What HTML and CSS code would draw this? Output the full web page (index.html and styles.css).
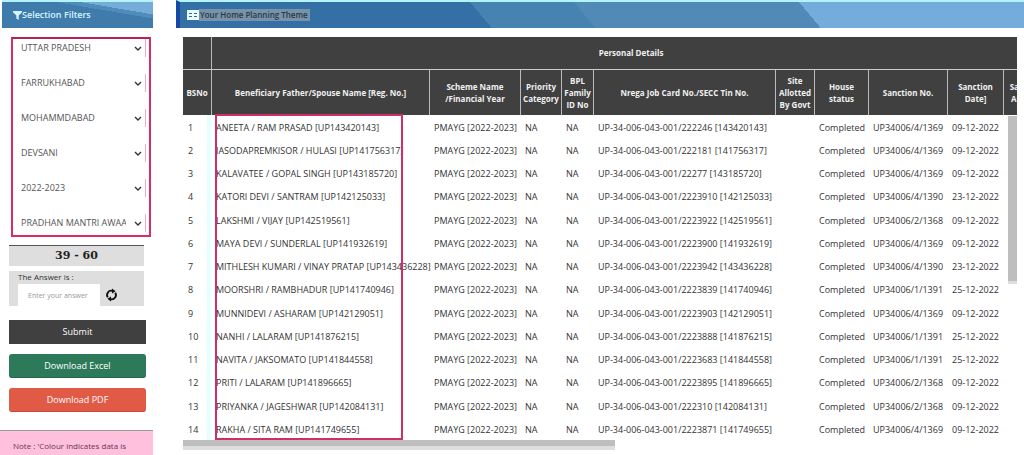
FILE: index.html
```html
<!DOCTYPE html>
<html lang="en">
<head>
<meta charset="utf-8">
<title>Home Planning</title>
<link rel="stylesheet" href="styles.css">
</head>
<body>
<div class="page">
  <aside class="sidebar">
    <h2 class="bar bar-side">
      <svg class="funnel" viewBox="0 0 10 10"><path d="M0 0h10v1.500L6.300 5v5L3.700 8.300V5L0 1.500z"/></svg>Selection Filters
    </h2>
    <form class="form">
      <div class="filters">
        <label class="field"><select aria-label="State"><option>UTTAR PRADESH</option></select><svg viewBox="0 0 8 5"><path d="M1 1l3 3 3-3"/></svg></label>
        <label class="field"><select aria-label="District"><option>FARRUKHABAD</option></select><svg viewBox="0 0 8 5"><path d="M1 1l3 3 3-3"/></svg></label>
        <label class="field"><select aria-label="Block"><option>MOHAMMDABAD</option></select><svg viewBox="0 0 8 5"><path d="M1 1l3 3 3-3"/></svg></label>
        <label class="field"><select aria-label="Panchayat"><option>DEVSANI</option></select><svg viewBox="0 0 8 5"><path d="M1 1l3 3 3-3"/></svg></label>
        <label class="field"><select aria-label="Year"><option>2022-2023</option></select><svg viewBox="0 0 8 5"><path d="M1 1l3 3 3-3"/></svg></label>
        <label class="field"><select aria-label="Scheme"><option>PRADHAN MANTRI AWAA</option></select><svg viewBox="0 0 8 5"><path d="M1 1l3 3 3-3"/></svg></label>
      </div>
      <div class="captcha">39 - 60</div>
      <div class="answer">
        <label for="answer">The Answer is :</label>
        <div class="answer-row">
          <input id="answer" type="text" placeholder="Enter your answer">
          <button class="refresh" type="button" aria-label="Refresh">
            <svg viewBox="0 0 14 14"><path class="arc" d="M3 9.500A4.600 4.600 0 0 1 8 2.500M11 4.500A4.600 4.600 0 0 1 6 11.500"/><path d="M7.500 0l4 3-4 2.500zM6.500 14l-4-3 4-2.500z"/></svg>
          </button>
        </div>
      </div>
      <button class="btn btn-submit" type="submit">Submit</button>
      <button class="btn btn-excel" type="button">Download Excel</button>
      <button class="btn btn-pdf" type="button">Download PDF</button>
    </form>
    <p class="note">Note : 'Colour indicates data is</p>
  </aside>
  <main class="main">
    <h1 class="bar bar-main">
      <svg class="tablet" viewBox="0 0 12 10"><path class="panel" d="M0 0h12v10H0z"/><path d="M2 3h3v1H2zM7 3h3v1H7zM2 6h3v1H2zM7 6h3v1H7z"/></svg><span class="mark">Your Home Planning Theme</span>
    </h1>
    <div class="viewport">
      <table class="grid">
        <colgroup><col class="c-no"><col class="c-name"><col class="c-scheme"><col class="c-priority"><col class="c-bpl"><col class="c-job"><col class="c-site"><col class="c-status"><col class="c-sanction"><col class="c-date"><col class="c-amount"></colgroup>
        <thead>
          <tr class="group"><th></th><th colspan="10">Personal Details</th></tr>
          <tr class="heads"><th>BSNo</th><th>Beneficiary Father/Spouse Name [Reg. No.]</th><th>Scheme Name /Financial Year</th><th>Priority Category</th><th>BPL Family ID No</th><th>Nrega Job Card No./SECC Tin No.</th><th>Site Allotted By Govt</th><th>House<br>status</th><th>Sanction No.</th><th>Sanction Date]</th><th>Sanction Amount</th></tr>
        </thead>
        <tbody>
          <tr><td>1</td><td>ANEETA / RAM PRASAD [UP143420143]</td><td>PMAYG [2022-2023]</td><td>NA</td><td>NA</td><td>UP-34-006-043-001/222246 [143420143]</td><td></td><td>Completed</td><td>UP34006/4/1369</td><td>09-12-2022</td><td></td></tr>
          <tr><td>2</td><td>JASODAPREMKISOR / HULASI [UP141756317]</td><td>PMAYG [2022-2023]</td><td>NA</td><td>NA</td><td>UP-34-006-043-001/222181 [141756317]</td><td></td><td>Completed</td><td>UP34006/4/1369</td><td>09-12-2022</td><td></td></tr>
          <tr><td>3</td><td>KALAVATEE / GOPAL SINGH [UP143185720]</td><td>PMAYG [2022-2023]</td><td>NA</td><td>NA</td><td>UP-34-006-043-001/22277 [143185720]</td><td></td><td>Completed</td><td>UP34006/4/1369</td><td>09-12-2022</td><td></td></tr>
          <tr><td>4</td><td>KATORI DEVI / SANTRAM [UP142125033]</td><td>PMAYG [2022-2023]</td><td>NA</td><td>NA</td><td>UP-34-006-043-001/2223910 [142125033]</td><td></td><td>Completed</td><td>UP34006/4/1390</td><td>23-12-2022</td><td></td></tr>
          <tr><td>5</td><td>LAKSHMI / VIJAY [UP142519561]</td><td>PMAYG [2022-2023]</td><td>NA</td><td>NA</td><td>UP-34-006-043-001/2223922 [142519561]</td><td></td><td>Completed</td><td>UP34006/2/1368</td><td>09-12-2022</td><td></td></tr>
          <tr><td>6</td><td>MAYA DEVI / SUNDERLAL [UP141932619]</td><td>PMAYG [2022-2023]</td><td>NA</td><td>NA</td><td>UP-34-006-043-001/2223900 [141932619]</td><td></td><td>Completed</td><td>UP34006/4/1369</td><td>09-12-2022</td><td></td></tr>
          <tr><td>7</td><td>MITHLESH KUMARI / VINAY PRATAP [UP143436228]</td><td>PMAYG [2022-2023]</td><td>NA</td><td>NA</td><td>UP-34-006-043-001/2223942 [143436228]</td><td></td><td>Completed</td><td>UP34006/4/1390</td><td>23-12-2022</td><td></td></tr>
          <tr><td>8</td><td>MOORSHRI / RAMBHADUR [UP141740946]</td><td>PMAYG [2022-2023]</td><td>NA</td><td>NA</td><td>UP-34-006-043-001/2223839 [141740946]</td><td></td><td>Completed</td><td>UP34006/1/1391</td><td>25-12-2022</td><td></td></tr>
          <tr><td>9</td><td>MUNNIDEVI / ASHARAM [UP142129051]</td><td>PMAYG [2022-2023]</td><td>NA</td><td>NA</td><td>UP-34-006-043-001/2223903 [142129051]</td><td></td><td>Completed</td><td>UP34006/4/1369</td><td>09-12-2022</td><td></td></tr>
          <tr><td>10</td><td>NANHI / LALARAM [UP141876215]</td><td>PMAYG [2022-2023]</td><td>NA</td><td>NA</td><td>UP-34-006-043-001/2223888 [141876215]</td><td></td><td>Completed</td><td>UP34006/1/1391</td><td>25-12-2022</td><td></td></tr>
          <tr><td>11</td><td>NAVITA / JAKSOMATO [UP141844558]</td><td>PMAYG [2022-2023]</td><td>NA</td><td>NA</td><td>UP-34-006-043-001/2223683 [141844558]</td><td></td><td>Completed</td><td>UP34006/1/1391</td><td>25-12-2022</td><td></td></tr>
          <tr><td>12</td><td>PRITI / LALARAM [UP141896665]</td><td>PMAYG [2022-2023]</td><td>NA</td><td>NA</td><td>UP-34-006-043-001/2223895 [141896665]</td><td></td><td>Completed</td><td>UP34006/2/1368</td><td>09-12-2022</td><td></td></tr>
          <tr><td>13</td><td>PRIYANKA / JAGESHWAR [UP142084131]</td><td>PMAYG [2022-2023]</td><td>NA</td><td>NA</td><td>UP-34-006-043-001/222310 [142084131]</td><td></td><td>Completed</td><td>UP34006/2/1368</td><td>09-12-2022</td><td></td></tr>
          <tr><td>14</td><td>RAKHA / SITA RAM [UP141749655]</td><td>PMAYG [2022-2023]</td><td>NA</td><td>NA</td><td>UP-34-006-043-001/2223871 [141749655]</td><td></td><td>Completed</td><td>UP34006/4/1369</td><td>09-12-2022</td><td></td></tr>
        </tbody>
      </table>
      <div class="highlight"></div>
      <div class="scroll-y"></div>
    </div>
    <div class="scroll-x"></div>
  </main>
</div>
</body>
</html>
```
FILE: styles.css
```css
* { box-sizing: border-box; }
body {
  margin: 0;
  background: #fff;
  color: #333;
  font: 9px/12px "Open Sans", "Noto Sans", sans-serif;
}
button, input, select { font: inherit; color: inherit; }
.page { display: flex; align-items: flex-start; gap: 23px; }
.sidebar { flex: 0 0 153px; min-width: 0; }
.main { flex: 1; min-width: 0; }

.bar {
  display: flex;
  align-items: center;
  height: 28px;
  margin: 0;
  border-top: 2px solid #b4f3fc;
  color: #d5f6ff;
  font-size: 9px;
  font-weight: 600;
}
.bar-side {
  margin-left: 2px;
  padding-left: 11px;
  background: linear-gradient(to bottom left, #76add8 0 24%, #4f8cbb 24% 32%, #3f7cab 32%);
}
.bar-main {
  padding-left: 7px;
  background: linear-gradient(50deg, #3470a6 0 36%, #4783b1 36% 48%, #518ab7 48% 74%, #74acdc 74%);
  border-left: 4px solid #1449a5;
}
.funnel { width: 9px; height: 9px; fill: #d5f6ff; }
.tablet { width: 12px; height: 10px; fill: #34689b; }
.tablet .panel { fill: #e9fcff; }
.mark { padding: 0 2px 0 1px; background: #7893a8; color: #25394b; font-size: 8px; }

.form { padding: 9px 2px 0 9px; }
.filters {
  display: grid;
  gap: 17px;
  margin: 0 0 8px 2px;
  padding-bottom: 3px;
  border: 2px solid #d82c66;
  border-top-color: #b82153;
}
.field { position: relative; display: grid; align-items: center; height: 18px; padding: 0 3px 0 8px; }
.field select {
  appearance: none;
  width: 100%;
  height: 18px;
  padding: 0 19px 0 0;
  border: 0;
  border-right: 1px solid #f4a9c6;
  background: #fff;
  color: #555;
}
.field svg {
  position: absolute;
  right: 7px;
  width: 8px;
  height: 5px;
  fill: none;
  stroke: #333;
  stroke-width: 1.4;
  pointer-events: none;
}
.captcha {
  height: 21px;
  margin-right: 7px;
  border-top: 1px solid #555;
  background: #dedede;
  color: #222;
  font: bold 11px/20px "DejaVu Serif", serif;
  text-align: center;
}
.answer { margin: 5px 7px 14px 0; padding-left: 9px; background: #dedede; }
.answer label { display: block; padding-bottom: 2px; font-size: 8px; line-height: 11px; }
.answer-row { display: flex; align-items: center; gap: 5px; }
.answer input {
  flex: 0 0 82px;
  min-width: 0;
  height: 22px;
  padding: 0 10px;
  border: 0;
  background: #fff;
  font-size: 7px;
}
.answer input::placeholder { color: #999; }
.refresh { display: flex; padding: 0; border: 0; background: none; }
.refresh svg { width: 13px; height: 14px; fill: #111; }
.refresh .arc { fill: none; stroke: #111; stroke-width: 2; }
.form .btn {
  display: block;
  width: calc(100% - 5px);
  height: 24px;
  margin: 0 0 10px;
  padding: 0;
  border: 0;
  border-radius: 3px;
  color: #fff;
  text-align: center;
}
.form .btn-submit { border-radius: 0; background: #404040; }
.form .btn-excel { background: #2d7a5b; border-bottom: 1px solid #23664a; }
.form .btn-pdf { background: #e15a45; border-bottom: 1px solid #c8463a; }
.note {
  margin: 18px 0 0;
  padding: 9px 0 3px 13px;
  border-top: 1px solid #999;
  background: #ffc0dd;
  color: #6b3350;
  font-size: 8px;
  white-space: nowrap;
}

.viewport { position: relative; margin: 9px 7px 0; overflow: hidden; }
.grid { width: 867px; table-layout: fixed; border-collapse: separate; border-spacing: 0; }
.c-no { width: 28px; }
.c-name { width: 218px; }
.c-scheme { width: 91px; }
.c-priority { width: 41px; }
.c-bpl { width: 32px; }
.c-job { width: 182px; }
.c-site { width: 39px; }
.c-status { width: 54px; }
.c-sanction { width: 79px; }
.c-date { width: 56px; }
.c-amount { width: 47px; }
.grid th {
  padding: 0 1px;
  border-left: 1px solid #bbb;
  background: #404040;
  color: #f0f0f0;
  font-size: 8px;
  font-weight: 700;
  line-height: 12px;
  text-align: center;
}
.grid th:first-child { border-left: 0; }
.group th { height: 33px; border-bottom: 1px solid #ccc; }
.heads th { height: 45px; }
.grid td { height: 23px; padding: 2px 0 0 5px; white-space: nowrap; }
.grid tr:nth-child(4n) td { height: 24px; }
.grid td:first-child { border-right: 4px solid #e3ffff; }
.highlight {
  position: absolute;
  top: 77px;
  bottom: 0;
  left: 32px;
  width: 188px;
  border: 2px solid #cf2f66;
}
.scroll-y { position: absolute; top: 79px; right: 0; width: 9px; height: 168px; background: #bebebe; border-bottom: 3px solid #ddd; }
.scroll-x { width: 51%; height: 10px; margin-left: 7px; background: #bebebe; border-bottom: 4px solid #dedede; }
```
